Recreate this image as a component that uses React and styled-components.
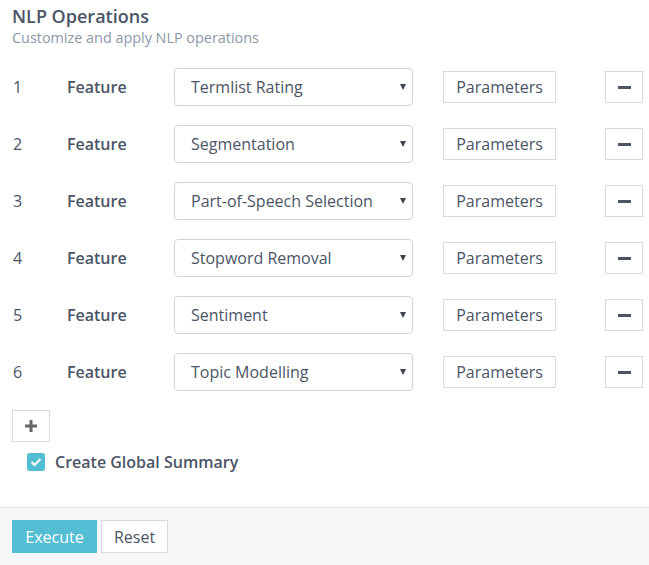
import React from 'react'
import styled, { createGlobalStyle } from 'styled-components'

const Global = createGlobalStyle`
  body {
    margin: 0;
    background: #fff;
    font-family: 'Open Sans', 'Liberation Sans', sans-serif;
    color: #4b5566;
  }
`

const Page = styled.div`
  display: flex;
  flex-direction: column;
  min-height: 565px;
`

const Body = styled.div`
  padding: 4px 12px 0;
  flex: 1;
`

const Title = styled.h2`
  margin: 0;
  font-size: 18px;
  font-weight: 600;
  line-height: 24px;
  color: #4b5566;
`

const Subtitle = styled.div`
  font-size: 14.4px;
  line-height: 20px;
  color: #8c98aa;
`

const Rows = styled.div`
  margin-top: 20px;
  display: flex;
  flex-direction: column;
  gap: 19px;
`

const Row = styled.div`
  display: grid;
  grid-template-columns: 55px 107px 239px 30px 113px 49px 38px;
  align-items: center;
  height: 38px;
  font-size: 16px;
`

const Num = styled.span`
  padding-left: 1px;
`

const Label = styled.span`
  font-weight: 600;
`

const SelectWrap = styled.div`
  position: relative;
  grid-column: 3;
  height: 38px;
`

const Select = styled.select`
  appearance: none;
  width: 100%;
  height: 100%;
  box-sizing: border-box;
  border: 1px solid #cfd5dd;
  border-radius: 4px;
  background: #fff;
  padding: 0 26px 0 16px;
  font: inherit;
  font-size: 16px;
  color: #4b5566;
`

const Caret = styled.span`
  position: absolute;
  right: 7px;
  top: 16px;
  width: 0;
  height: 0;
  border-left: 3.5px solid transparent;
  border-right: 3.5px solid transparent;
  border-top: 6px solid #3d4450;
  pointer-events: none;
`

const Button = styled.button`
  box-sizing: border-box;
  height: ${p => p.$h || 32}px;
  width: ${p => (p.$w ? `${p.$w}px` : 'auto')};
  border: 1px solid ${p => (p.$primary ? '#53bdd3' : '#d6dbe2')};
  background: ${p => (p.$primary ? '#53bdd3' : '#fff')};
  color: ${p => (p.$primary ? '#fff' : '#4b5566')};
  font-family: inherit;
  font-size: 16px;
  padding: 0;
  display: flex;
  align-items: center;
  justify-content: center;
  cursor: pointer;
`

const ParamButton = styled(Button)`
  grid-column: 5;
`

const RemoveButton = styled(Button)`
  grid-column: 7;
`

const MinusBar = styled.span`
  width: 13px;
  height: 3px;
  background: #4b5566;
`

const AddButton = styled(Button)`
  margin-top: 19px;
`

const CheckRow = styled.label`
  display: flex;
  align-items: center;
  gap: 10px;
  margin: 11px 0 0 15px;
  font-size: 16px;
  font-weight: 600;
  line-height: 18px;
`

const Box = styled.span`
  width: 18px;
  height: 18px;
  border-radius: 3px;
  background: #53bdd3;
  display: flex;
  align-items: center;
  justify-content: center;
`

const Footer = styled.div`
  border-top: 1px solid #dfe2e6;
  background: #f7f7f7;
  padding: 12px 12px;
  display: flex;
  gap: 4px;
  height: 33px;
`

const features = [
  'Termlist Rating',
  'Segmentation',
  'Part-of-Speech Selection',
  'Stopword Removal',
  'Sentiment',
  'Topic Modelling',
]

export default function App() {
  return (
    <Page>
      <Global />
      <Body>
        <Title>NLP Operations</Title>
        <Subtitle>Customize and apply NLP operations</Subtitle>
        <Rows>
          {features.map((f, i) => (
            <Row key={f}>
              <Num>{i + 1}</Num>
              <Label>Feature</Label>
              <SelectWrap>
                <Select defaultValue={f}>
                  {features.map(o => (
                    <option key={o}>{o}</option>
                  ))}
                </Select>
                <Caret />
              </SelectWrap>
              <ParamButton $w={113}>Parameters</ParamButton>
              <RemoveButton $w={38}>
                <MinusBar />
              </RemoveButton>
            </Row>
          ))}
        </Rows>
        <AddButton $w={38}>
          <svg width="14" height="14" viewBox="0 0 14 14">
            <path d="M7 1v12M1 7h12" stroke="#666" strokeWidth="3" />
          </svg>
        </AddButton>
        <CheckRow>
          <Box>
            <svg width="12" height="10" viewBox="0 0 12 10">
              <path d="M1.5 5l3 3L10.5 2" fill="none" stroke="#fff" strokeWidth="2" />
            </svg>
          </Box>
          Create Global Summary
        </CheckRow>
      </Body>
      <Footer>
        <Button $primary $h={33} $w={85}>Execute</Button>
        <Button $h={33} $w={67}>Reset</Button>
      </Footer>
    </Page>
  )
}
